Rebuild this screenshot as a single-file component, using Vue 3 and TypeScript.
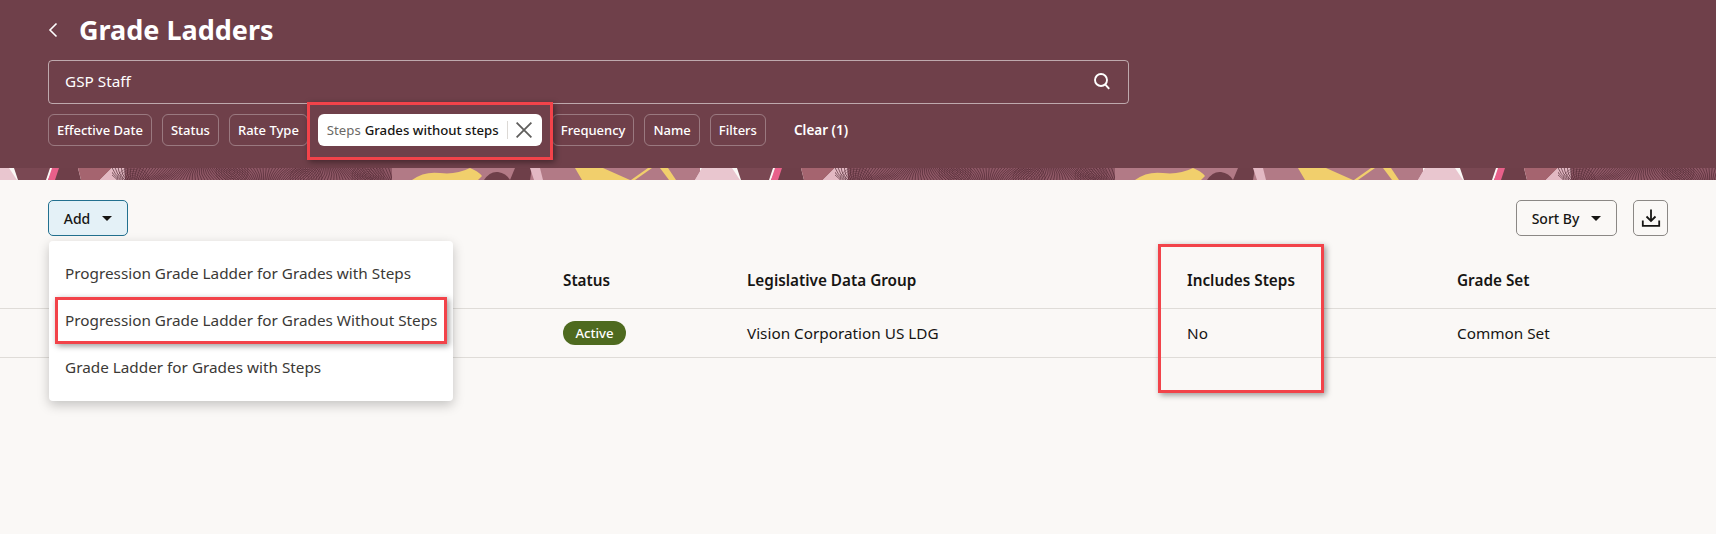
<script setup lang="ts">
// Filter chips and table data for the Grade Ladders page
const chipsBefore = ['Effective Date', 'Status', 'Rate Type']
const chipsAfter = ['Frequency', 'Name', 'Filters']
const menuItems = [
  { label: 'Progression Grade Ladder for Grades with Steps', marked: false },
  { label: 'Progression Grade Ladder for Grades Without Steps', marked: true },
  { label: 'Grade Ladder for Grades with Steps', marked: false },
]

// The decorative band repeats every 723px
const TILE = 723
const tiles = [-1, 0, 1, 2].map((n) => n * TILE)

const flats = [
  { fill: '#b27a86', points: '392,0 700,0 700,12 392,12' },
  { fill: '#7a4853', points: '14,0 50,0 46,12 18,12' },
  { fill: '#6e3f49', points: '54,0 78,0 81,12 48,12' },
  { fill: '#a5646f', points: '78,0 112,0 100,12 81,12' },
  { fill: '#e3b8c3', points: '112,0 125,0 125,12 100,12' },
  { fill: '#e9c6cf', points: '-21,0 -8,0 17,12 -28,12' },
  { fill: '#e9c6cf', points: '702,0 732,0 740,12 695,12' },
  { fill: '#e8608a', points: '52,0 59,0 55,12 48,12' },
  { fill: '#6e3f49', points: '515,0 532,0 530,12 510,12' },
  { fill: '#e3b8c3', points: '530,0 540,0 543,12 534,12' },
  { fill: '#f1cf6c', points: '575,0 603,0 630,12 582,12' },
  { fill: '#f1cf6c', points: '648,0 652,0 635,12 631,12' },
  { fill: '#f1cf6c', points: '660,0 668,0 676,12 669,12' },
]

// Fingerprint texture: skewed wavy lines with a few concentric whorls
function buildLines(): string {
  let d = ''
  for (let x = 112; x < 392; x += 2.4) {
    const lean = 7 * Math.sin(x / 21)
    const bow = 3 * Math.cos(x / 13)
    d += `M${(x + lean).toFixed(1)} 0Q${(x + bow).toFixed(1)} 6 ${(x - lean).toFixed(1)} 12`
  }
  return d
}
function buildWhorls(): string {
  let d = ''
  for (const [cx, cy] of [[133, 12], [232, 4], [306, 10], [368, 8]]) {
    for (let r = 3; r < 16; r += 2.6) {
      d += `M${cx - r} ${cy}A${r} ${r * 0.8} 0 1 1 ${cx + r} ${cy}A${r} ${r * 0.8} 0 1 1 ${cx - r} ${cy}`
    }
  }
  return d
}
const linesPath = buildLines()
const whorlsPath = buildWhorls()
</script>

<template>
  <div class="page">
    <header class="banner">
      <div class="title-row">
        <svg class="back" width="10" height="16" viewBox="0 0 10 16">
          <path d="M8.5 1.5 2 8l6.5 6.5" fill="none" stroke="#fff" stroke-width="1.6" />
        </svg>
        <h1>Grade Ladders</h1>
      </div>
      <div class="search">
        <span>GSP Staff</span>
        <svg width="18" height="18" viewBox="0 0 18 18">
          <circle cx="8" cy="8" r="6" fill="none" stroke="#fff" stroke-width="1.9" />
          <path d="m12.2 12.4 4 4.4" fill="none" stroke="#fff" stroke-width="1.9" />
        </svg>
      </div>
      <div class="chips">
        <button v-for="c in chipsBefore" :key="c" class="chip">{{ c }}</button>
        <div class="chip-on">
          <span class="chip-key">Steps</span>
          <span class="chip-val">Grades without steps</span>
          <i class="chip-sep"></i>
          <svg width="16" height="16" viewBox="0 0 16 16">
            <path d="m.6.6 14.8 14.8m0-14.8L.6 15.4" fill="none" stroke="#5f5e5c" stroke-width="1.8" />
          </svg>
          <span class="mark mark-chip"></span>
        </div>
        <button v-for="c in chipsAfter" :key="c" class="chip">{{ c }}</button>
        <span class="clear">Clear (1)</span>
      </div>
    </header>

    <svg class="band" width="1716" height="12" viewBox="0 0 1716 12">
      <g v-for="t in tiles" :key="t" :transform="`translate(${t} 0)`">
        <rect x="112" y="0" width="280" height="12" fill="#8f5866" />
        <polygon v-for="(f, i) in flats" :key="i" :points="f.points" :fill="f.fill" />
        <path d="M412 12q12-9 28-7t30-5q8 3 12 8l-4 4z" fill="#f1cf6c" />
        <path d="M484 12q6-9 14-8t12 8z" fill="#6e3f49" />
        <svg x="112" y="0" width="280" height="12" viewBox="112 0 280 12">
          <path :d="linesPath" fill="none" stroke="#4f2833" stroke-width="0.8" opacity="0.85" />
          <path :d="whorlsPath" fill="none" stroke="#4f2833" stroke-width="0.7" opacity="0.6" />
        </svg>
      </g>
    </svg>

    <main class="content">
      <div class="toolbar">
        <div class="add-wrap">
          <button class="btn btn-add">Add<i class="caret"></i></button>
          <ul class="menu">
            <li v-for="m in menuItems" :key="m.label">
              {{ m.label }}
              <span v-if="m.marked" class="mark mark-item"></span>
            </li>
          </ul>
        </div>
        <div class="tools">
          <button class="btn btn-sort">Sort By<i class="caret"></i></button>
          <button class="btn btn-icon">
            <svg width="20" height="20" viewBox="0 0 20 20">
              <path d="M10 1.5V13M5.5 8.5 10 13l4.5-4.5M1.8 12.5v5.3h16.4v-5.3" fill="none" stroke="#161513" stroke-width="1.8" />
            </svg>
          </button>
        </div>
      </div>

      <div class="table">
        <div class="row head">
          <span></span><span>Status</span><span>Legislative Data Group</span><span>Includes Steps</span><span>Grade Set</span>
        </div>
        <div class="row body">
          <span></span>
          <span><em class="pill">Active</em></span>
          <span>Vision Corporation US LDG</span>
          <span>No</span>
          <span>Common Set</span>
        </div>
        <span class="mark mark-col"></span>
      </div>
    </main>
  </div>
</template>

<style scoped>
.page {
  height: 534px;
  overflow: hidden;
  background: #faf8f6;
  font-family: "Noto Sans", Lato, sans-serif;
  color: #161513;
}
.banner {
  height: 168px;
  box-sizing: border-box;
  padding: 14px 48px 0;
  background: #6f404a;
  color: #fff;
}
.title-row {
  display: flex;
  align-items: center;
  gap: 21px;
  height: 32px;
}
.back {
  flex: none;
}
h1 {
  margin: 0;
  font-size: 27px;
  line-height: 32px;
  font-weight: 700;
}
.search {
  display: flex;
  align-items: center;
  justify-content: space-between;
  box-sizing: border-box;
  width: 1081px;
  height: 44px;
  margin-top: 14px;
  padding: 0 17px 2px 16px;
  border: 1px solid rgba(255, 255, 255, 0.55);
  border-radius: 4px;
  font-size: 15.3px;
}
.chips {
  display: flex;
  align-items: center;
  gap: 10px;
  margin-top: 10px;
}
.chip {
  height: 32px;
  box-sizing: border-box;
  padding: 0 8px;
  border: 1px solid rgba(255, 255, 255, 0.3);
  border-radius: 6px;
  background: none;
  color: #fff;
  font: inherit;
  font-size: 13px;
  font-weight: 500;
  white-space: nowrap;
}
.chip-on {
  position: relative;
  display: flex;
  align-items: center;
  box-sizing: border-box;
  flex: none;
  width: 224px;
  height: 32px;
  padding: 0 9px;
  border-radius: 6px;
  background: #fff;
  font-size: 13.2px;
  color: #161513;
  white-space: nowrap;
}
.chip-key {
  color: #6b6966;
  margin-right: 4px;
}
.chip-val {
  font-weight: 500;
}
.chip-sep {
  flex: none;
  width: 1px;
  height: 18px;
  margin: 0 8px;
  background: #dcd9d5;
}
.clear {
  margin-left: 18px;
  font-size: 13.5px;
  font-weight: 600;
}
.band {
  display: block;
}
.content {
  padding-top: 20px;
}
.toolbar {
  display: flex;
  justify-content: space-between;
  padding: 0 48px;
}
.tools {
  display: flex;
  gap: 16px;
}
.add-wrap {
  position: relative;
}
.btn {
  display: flex;
  align-items: center;
  justify-content: center;
  box-sizing: border-box;
  height: 36px;
  border: 1px solid #8b8885;
  border-radius: 5px;
  background: none;
  color: #161513;
  font: inherit;
  font-size: 14px;
  font-weight: 500;
}
.btn-add {
  width: 80px;
  gap: 12px;
  border-color: #22708f;
  background: #e4f1f7;
}
.btn-sort {
  width: 101px;
  gap: 12px;
}
.btn-icon {
  width: 35px;
  padding: 0;
}
.caret {
  width: 0;
  height: 0;
  border-left: 5px solid transparent;
  border-right: 5px solid transparent;
  border-top: 5px solid #161513;
}
.menu {
  position: absolute;
  z-index: 2;
  top: 41px;
  left: 1px;
  width: 404px;
  height: 160px;
  box-sizing: border-box;
  margin: 0;
  padding: 9px 0;
  list-style: none;
  border-radius: 4px;
  background: #fff;
  box-shadow: 0 4px 12px rgba(0, 0, 0, 0.22);
  font-size: 15.3px;
  color: #3b3936;
}
.menu li {
  position: relative;
  height: 47px;
  line-height: 47px;
  padding-left: 16px;
  white-space: nowrap;
}
.table {
  position: relative;
  margin-top: 16px;
}
.row {
  display: grid;
  grid-template-columns: 563px 184px 440px 270px 1fr;
  align-items: center;
  border-bottom: 1px solid #dfdcd8;
  font-size: 15.3px;
}
.head {
  height: 56px;
  font-weight: 600;
}
.body {
  height: 48px;
}
.pill {
  display: inline-block;
  width: 63px;
  height: 24px;
  line-height: 24px;
  border-radius: 12px;
  background: #4e6a1f;
  color: #fff;
  font-size: 13.2px;
  font-style: normal;
  font-weight: 500;
  text-align: center;
}
.mark {
  position: absolute;
  box-sizing: border-box;
  border: 3px solid #f2434a;
  box-shadow: 2px 2px 6px rgba(0, 0, 0, 0.4);
  pointer-events: none;
}
.mark-chip {
  left: -11px;
  right: -11px;
  top: -12px;
  bottom: -14px;
}
.mark-item {
  left: 6px;
  right: 6px;
  top: 0;
  bottom: 0;
}
.mark-col {
  left: 1158px;
  top: -8px;
  width: 166px;
  height: 149px;
}
</style>

<style>
html,
body {
  margin: 0;
  background: #faf8f6;
}
</style>
